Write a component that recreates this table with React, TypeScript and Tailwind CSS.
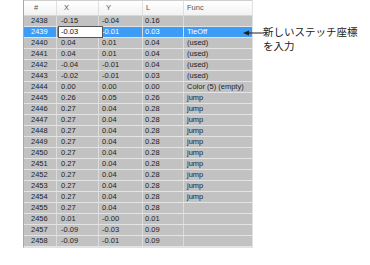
import React from "react";

type Row = { n: number; x: string; y: string; l: string; f: string };

const ROWS: Row[] = [
  { n: 2438, x: "-0.15", y: "-0.04", l: "0.16", f: "" },
  { n: 2439, x: "-0.03", y: "-0.01", l: "0.03", f: "TieOff" },
  { n: 2440, x: "0.04", y: "0.01", l: "0.04", f: "(used)" },
  { n: 2441, x: "0.04", y: "0.01", l: "0.04", f: "(used)" },
  { n: 2442, x: "-0.04", y: "-0.01", l: "0.04", f: "(used)" },
  { n: 2443, x: "-0.02", y: "-0.01", l: "0.03", f: "(used)" },
  { n: 2444, x: "0.00", y: "0.00", l: "0.00", f: "Color (5) (empty)" },
  { n: 2445, x: "0.26", y: "0.05", l: "0.26", f: "jump" },
  { n: 2446, x: "0.27", y: "0.04", l: "0.28", f: "jump" },
  { n: 2447, x: "0.27", y: "0.04", l: "0.28", f: "jump" },
  { n: 2448, x: "0.27", y: "0.04", l: "0.28", f: "jump" },
  { n: 2449, x: "0.27", y: "0.04", l: "0.28", f: "jump" },
  { n: 2450, x: "0.27", y: "0.04", l: "0.28", f: "jump" },
  { n: 2451, x: "0.27", y: "0.04", l: "0.28", f: "jump" },
  { n: 2452, x: "0.27", y: "0.04", l: "0.28", f: "jump" },
  { n: 2453, x: "0.27", y: "0.04", l: "0.28", f: "jump" },
  { n: 2454, x: "0.27", y: "0.04", l: "0.28", f: "jump" },
  { n: 2455, x: "0.27", y: "0.04", l: "0.28", f: "" },
  { n: 2456, x: "0.01", y: "-0.00", l: "0.01", f: "" },
  { n: 2457, x: "-0.09", y: "-0.03", l: "0.09", f: "" },
  { n: 2458, x: "-0.09", y: "-0.01", l: "0.09", f: "" },
];

const SELECTED = 2439;

export default function App() {
  return (
    <div
      className="w-[370px] h-[265px] bg-white flex overflow-hidden"
      style={{ fontFamily: '"Liberation Sans", Arial, sans-serif' }}
    >
      {/* Stitch list grid */}
      <div className="ml-[23px] w-[230px] h-[248px] flex flex-col border-l border-[#a8a8a8] border-r border-r-[#e2e2e2] border-b border-b-[#e2e2e2] text-[7.5px]">
        {/* Header */}
        <div className="h-[16px] shrink-0 grid grid-cols-[33px_42px_44px_41px_1fr] bg-gradient-to-b from-white to-[#f2f2f2] border-t border-[#cfcfcf] border-b border-b-[#d8d8d8] text-[#555]">
          <div className="pl-[10px] flex items-center border-r border-[#e0e0e0]">#</div>
          <div className="pl-[7px] flex items-center border-r border-[#e0e0e0]">X</div>
          <div className="pl-[7px] flex items-center border-r border-[#e0e0e0]">Y</div>
          <div className="pl-[3px] flex items-center border-r border-[#e0e0e0]">L</div>
          <div className="pl-[3px] flex items-center">Func</div>
        </div>

        {/* Rows */}
        {ROWS.map((r) => {
          const sel = r.n === SELECTED;
          return (
            <div
              key={r.n}
              className={`h-[11px] shrink-0 grid grid-cols-[33px_42px_44px_41px_1fr] border-b border-[#e4e4e4] ${
                sel ? "bg-[#3d9cf5] text-white" : "bg-[#c2c2c2] text-[#222]"
              }`}
            >
              <div className="pl-[7px] flex items-center border-r border-[#dcdcdc] leading-none">{r.n}</div>
              {sel ? (
                <div className="relative">
                  <div className="absolute left-[1px] top-[-1px] w-[45px] h-[12px] bg-white border border-[#555] text-[#111] pl-[2px] flex items-center leading-none">
                    {r.x}
                  </div>
                </div>
              ) : (
                <div className="pl-[4px] flex items-center border-r border-[#dcdcdc] leading-none">{r.x}</div>
              )}
              <div className="pl-[3px] flex items-center border-r border-[#dcdcdc] leading-none">{r.y}</div>
              <div className="pl-[2px] flex items-center border-r border-[#dcdcdc] leading-none">{r.l}</div>
              <div className="pl-[3px] flex items-center leading-none whitespace-nowrap">{r.f}</div>
            </div>
          );
        })}
      </div>

      {/* Annotation */}
      <div className="relative pt-[25px] pl-[10px]">
        <svg
          className="absolute left-[-10px] top-[29px]"
          width="22"
          height="8"
          viewBox="0 0 22 8"
        >
          <line x1="3" y1="4" x2="21" y2="4" stroke="#222" strokeWidth="1" />
          <polygon points="0,4 6,1.5 6,6.5" fill="#222" />
        </svg>
        <div
          className="flex flex-col text-[10.5px] leading-[14px] text-[#222]"
          style={{ fontFamily: '"Noto Sans CJK JP", "Liberation Sans", sans-serif' }}
        >
          <span className="whitespace-nowrap">新しいステッチ座標</span>
          <span className="whitespace-nowrap">を入力</span>
        </div>
      </div>
    </div>
  );
}
